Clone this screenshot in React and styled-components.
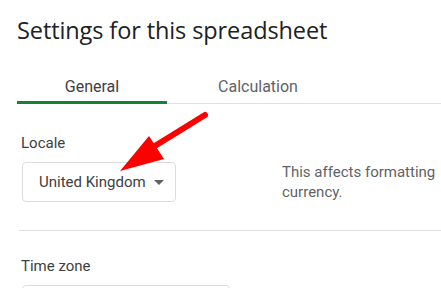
import React from 'react';
import styled, { createGlobalStyle } from 'styled-components';

const GlobalStyle = createGlobalStyle`
    html, body {
        margin: 0;
        padding: 0;
        background: #fff;
        overflow: hidden;
    }
    body {
        font-family: Roboto, "Liberation Sans", Arial, sans-serif;
        -webkit-font-smoothing: antialiased;
    }
`;

const Page = styled.div`
    position: relative;
    width: 441px;
    height: 288px;
    overflow: hidden;
    padding: 14px 0 0 17px;
    box-sizing: border-box;
`;

const Title = styled.h1`
    margin: 0;
    font-family: "Open Sans", Roboto, sans-serif;
    font-size: 23.5px;
    line-height: 32px;
    font-weight: 400;
    color: #202124;
    letter-spacing: -0.1px;
`;

const TabBar = styled.div`
    display: flex;
    border-bottom: 1px solid #e0e0e0;
`;

const Tab = styled.div`
    width: ${p => p.$width}px;
    box-sizing: border-box;
    text-align: center;
    padding: 31px 0 4px;
    margin-bottom: -1px;
    font-size: 16px;
    line-height: 20px;
    color: ${p => (p.$active ? '#3c4043' : '#5f6368')};
    border-bottom: 3px solid ${p => (p.$active ? '#188038' : 'transparent')};
`;

const Content = styled.div`
    margin-left: 2px;
`;

const Section = styled.div`
    padding: ${p => p.$top}px 0 28px;
    border-bottom: ${p => (p.$divider ? '1px solid #e0e0e0' : 'none')};
`;

const Label = styled.div`
    padding-left: 2px;
    font-size: 15px;
    line-height: 20px;
    color: #3c4043;
`;

const Row = styled.div`
    display: flex;
    align-items: flex-start;
    gap: 106px;
    margin-top: 9px;
`;

const Select = styled.div`
    display: flex;
    align-items: center;
    width: ${p => p.$width}px;
    height: 40px;
    margin-left: 3px;
    box-sizing: border-box;
    padding: 0 11px 0 16px;
    border: 1px solid #dadce0;
    border-radius: 4px;
    font-size: 15px;
    line-height: 20px;
    color: #3c4043;
    white-space: nowrap;
`;

const SelectText = styled.span`
    flex: 1;
`;

const Caret = styled.span`
    width: 0;
    height: 0;
    border-left: 5px solid transparent;
    border-right: 5px solid transparent;
    border-top: 5px solid #5f6368;
`;

const Description = styled.div`
    font-size: 15px;
    line-height: 20px;
    color: #5f6368;
    white-space: nowrap;
`;

const Arrow = styled.svg`
    position: absolute;
    left: 0;
    top: 0;
    pointer-events: none;
`;

const App = () => {
    return (
        <>
            <GlobalStyle />
            <Page>
                <Title>Settings for this spreadsheet</Title>
                <TabBar>
                    <Tab $active $width={150}>General</Tab>
                    <Tab $width={182}>Calculation</Tab>
                </TabBar>
                <Content>
                    <Section $top={29} $divider>
                        <Label>Locale</Label>
                        <Row>
                            <Select $width={154}>
                                <SelectText>United Kingdom</SelectText>
                                <Caret />
                            </Select>
                            <Description>
                                This affects formatting
                                <br />
                                currency.
                            </Description>
                        </Row>
                    </Section>
                    <Section $top={25}>
                        <Label>Time zone</Label>
                        <Row>
                            <Select $width={208}>
                                <SelectText />
                                <Caret />
                            </Select>
                        </Row>
                    </Section>
                </Content>
                {/* red annotation arrow pointing at the locale dropdown */}
                <Arrow width="441" height="288" viewBox="0 0 441 288">
                    <line x1="205" y1="115" x2="150" y2="149" stroke="#ff0000" strokeWidth="6" strokeLinecap="round" />
                    <polygon points="120,171 149,136 164,159" fill="#ff0000" />
                </Arrow>
            </Page>
        </>
    );
};

export default App;
